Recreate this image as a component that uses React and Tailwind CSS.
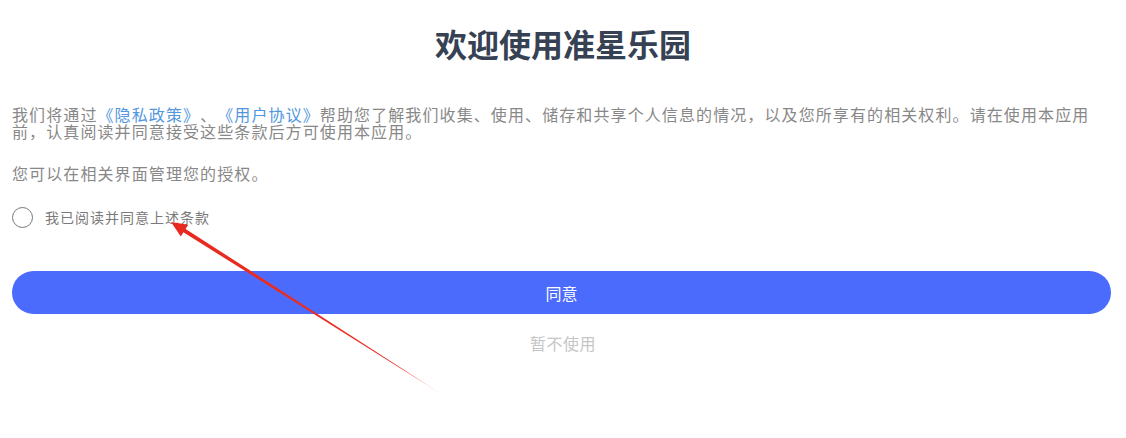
import React from "react";

export default function App() {
  return (
    <div className="relative w-[1126px] h-[438px] bg-white overflow-hidden [text-spacing-trim:space-all]" style={{ fontFamily: '"Noto Sans CJK SC", "Noto Sans", sans-serif' }}>
      <div className="px-3 flex flex-col">
        <h1 className="mt-[25px] text-center text-[32px] leading-[36px] font-bold text-[#364153]">欢迎使用准星乐园</h1>
        <p className="mt-[45px] pr-[16px] text-[16px] leading-[17px] tracking-[1.1px] text-[#888888] [text-spacing-trim:space-all]">
          我们将通过<span className="text-[#5296de]">《隐私政策》</span>、<span className="text-[#5296de]">《用户协议》</span>帮助您了解我们收集、使用、储存和共享个人信息的情况，以及您所享有的相关权利。请在使用本应用前，认真阅读并同意接受这些条款后方可使用本应用。
        </p>
        <p className="mt-[25px] text-[16px] leading-[17px] tracking-[1.1px] text-[#888888]">您可以在相关界面管理您的授权。</p>
        <div className="mt-[24px] flex items-center h-[22px]">
          <div className="w-[21px] h-[21px] rounded-full border border-[#777777]" />
          <span className="ml-[12px] text-[14px] leading-[20px] tracking-[1px] text-[#7a7a7a]">我已阅读并同意上述条款</span>
        </div>
        <button className="mt-[43px] h-[43px] w-[1099px] rounded-full bg-[#4b6bfd] text-white text-[16px] flex items-center justify-center">同意</button>
        <div className="mt-[19px] text-center text-[16px] leading-[20px] tracking-[0.5px] text-[#c6c6c6]">暂不使用</div>
      </div>
      <svg className="absolute left-0 top-0 pointer-events-none" width="1126" height="438" viewBox="0 0 1126 438">
        <defs>
          <linearGradient id="ag" x1="443" y1="395" x2="171" y2="222" gradientUnits="userSpaceOnUse">
            <stop offset="0" stopColor="#f04a40" stopOpacity="0.2" />
            <stop offset="0.15" stopColor="#ea2f25" />
            <stop offset="1" stopColor="#e8291f" />
          </linearGradient>
        </defs>
        <polygon points="171,222 188.2,224.7 185.6,228.9 443,395 183.4,232.3 180.8,236.5" fill="url(#ag)" />
      </svg>
    </div>
  );
}
